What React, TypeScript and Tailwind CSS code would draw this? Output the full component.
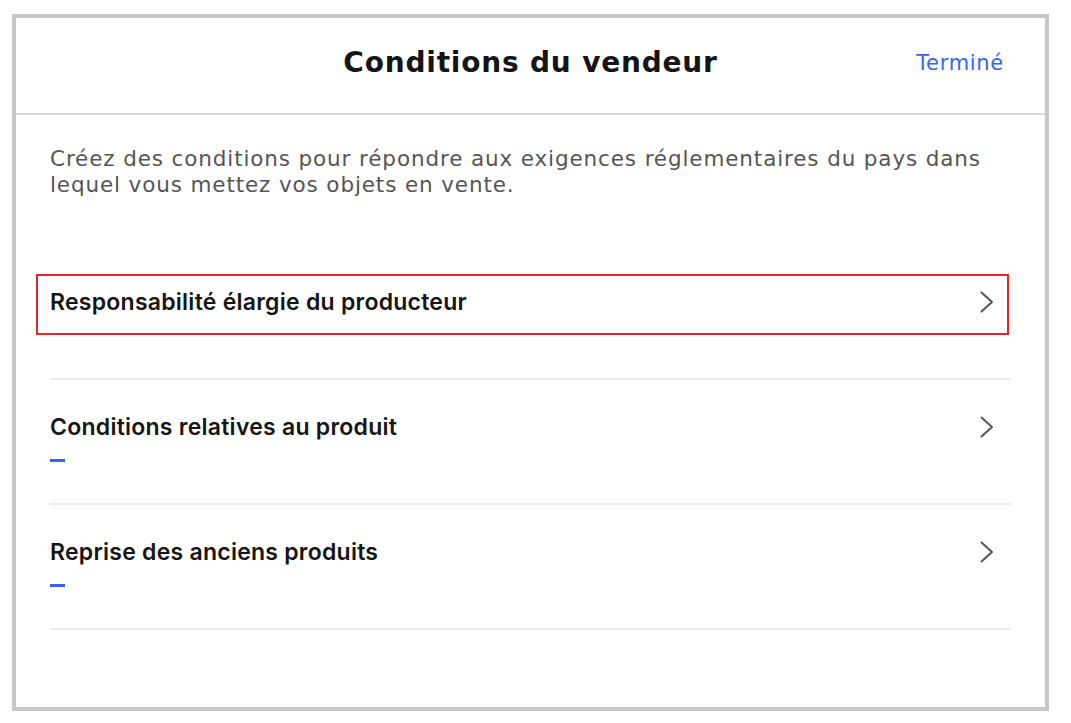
const Chevron = () => (
  <svg width="16" height="24" viewBox="0 0 16 24" fill="none" aria-hidden="true">
    <path d="M2.5 2.5 L13 12 L2.5 21.5" stroke="#555555" strokeWidth="2" strokeLinecap="round" strokeLinejoin="round" />
  </svg>
);

type Row = { title: string; dash: boolean; highlighted?: boolean };

const rows: Row[] = [
  { title: "Responsabilité élargie du producteur", dash: false, highlighted: true },
  { title: "Conditions relatives au produit", dash: true },
  { title: "Reprise des anciens produits", dash: true },
];

const ConditionRow = ({ row }: { row: Row }) => (
  <div className="relative h-[125px] border-b-2 border-[#ececec] pt-[33px]">
    {row.highlighted && (
      <div className="absolute -left-[14px] right-[2px] top-[19px] h-[61px] border-2 border-[#e3262b]" />
    )}
    <div className="flex items-center justify-between">
      <span className="font-['Inter',sans-serif] text-[23px] leading-[28px] font-semibold tracking-[0.25px] text-[#151515]">
        {row.title}
      </span>
      <span className="mr-[16px]">
        <Chevron />
      </span>
    </div>
    <div className="mt-[18px] h-[3px]">
      {row.dash && <div className="h-[3px] w-[15px] bg-[#3665f3]" />}
    </div>
  </div>
);

export default function App() {
  return (
    <div className="min-h-[723px] bg-white pl-[12px] pt-[14px] font-['DejaVu_Sans',sans-serif]">
      <div className="w-[1037px] h-[697px] border-4 border-[#c6c6c6] bg-white">
        <header className="relative flex h-[97px] items-center justify-center border-b-2 border-[#d9d9d9] pb-[5px]">
          <h1 className="text-[28px] font-bold tracking-[0.8px] text-[#151515]">Conditions du vendeur</h1>
          <button className="absolute right-[41px] top-[30px] text-[21px] tracking-[0.7px] text-[#3665f3]">Terminé</button>
        </header>
        <main className="px-[34px] pt-[31px]">
          <p className="text-[21.5px] leading-[26px] tracking-[0.87px] text-[#555555]">
            Créez des conditions pour répondre aux exigences réglementaires du pays dans lequel vous mettez vos objets en vente.
          </p>
          <div className="mt-[57px]">
            {rows.map((r) => (
              <ConditionRow key={r.title} row={r} />
            ))}
          </div>
        </main>
      </div>
    </div>
  );
}
